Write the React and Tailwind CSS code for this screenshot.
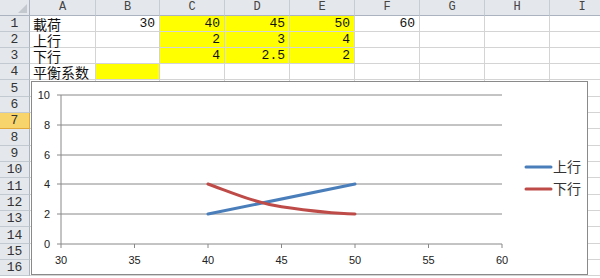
import React from "react";

const cols = [
  { key: "A", w: "w-[66px]" },
  { key: "B", w: "w-[64px]" },
  { key: "C", w: "w-[65px]" },
  { key: "D", w: "w-[65px]" },
  { key: "E", w: "w-[65px]" },
  { key: "F", w: "w-[65px]" },
  { key: "G", w: "w-[65px]" },
  { key: "H", w: "w-[65px]" },
  { key: "I", w: "w-[65px]" },
];

// rows 1-16, Excel rounds some rows up by a pixel
const rowHeights = [
  "h-[16px]", "h-[16px]", "h-[16px]", "h-[16px]",
  "h-[17px]", "h-[16px]", "h-[16px]", "h-[17px]",
  "h-[16px]", "h-[16px]", "h-[17px]", "h-[16px]",
  "h-[16px]", "h-[17px]", "h-[16px]", "h-[16px]",
];

const data = {
  1: { A: "載荷", B: "30", C: "40", D: "45", E: "50", F: "60" },
  2: { A: "上行", C: "2", D: "3", E: "4" },
  3: { A: "下行", C: "4", D: "2.5", E: "2" },
  4: { A: "平衡系数" },
};

const isYellow = (r, c) =>
  (r >= 1 && r <= 3 && (c === "C" || c === "D" || c === "E")) || (r === 4 && c === "B");

const yTicks = [
  { v: 10, y: 95 },
  { v: 8, y: 125 },
  { v: 6, y: 155 },
  { v: 4, y: 184 },
  { v: 2, y: 214 },
  { v: 0, y: 244 },
];

const xTicks = [
  { v: 30, x: 61 },
  { v: 35, x: 134.5 },
  { v: 40, x: 208 },
  { v: 45, x: 281.5 },
  { v: 50, x: 355 },
  { v: 55, x: 428.5 },
  { v: 60, x: 502 },
];

const Chart = () => (
  <div className="absolute left-[31px] top-[81px] w-[557px] h-[194px] border border-[#8a8a8a] bg-white">
    <svg width="555" height="192" className="block font-['Liberation_Sans',Arial,sans-serif]">
      <g transform="translate(-32,-82)">
        {yTicks.map((t) => (
          <g key={t.v}>
            <line x1="57" x2="502" y1={t.y} y2={t.y} stroke="#888" strokeWidth="1" />
            <text x="50" y={t.y + 4} fontSize="11" textAnchor="end" fill="#222">
              {t.v}
            </text>
          </g>
        ))}
        <line x1="61" x2="61" y1="95" y2="244" stroke="#888" strokeWidth="1" />
        {xTicks.map((t) => (
          <g key={t.v}>
            <line x1={t.x} x2={t.x} y1="244" y2="248" stroke="#888" strokeWidth="1" />
            <text x={t.x} y="264" fontSize="11" textAnchor="middle" fill="#222">
              {t.v}
            </text>
          </g>
        ))}
        <line x1="208" y1="214" x2="355" y2="184" stroke="#4a7ebb" strokeWidth="3" strokeLinecap="round" />
        <path
          d="M208,184 C233,193 256,203 281.5,206.7 S335,213.5 355,214"
          fill="none"
          stroke="#be4b48"
          strokeWidth="3"
          strokeLinecap="round"
        />
        <line x1="526" x2="551" y1="167" y2="167" stroke="#4a7ebb" strokeWidth="3" strokeLinecap="round" />
        <text x="553" y="172" fontSize="14" fill="#333" className="font-['Noto_Sans_CJK_SC',sans-serif]">
          上行
        </text>
        <line x1="526" x2="551" y1="189" y2="189" stroke="#be4b48" strokeWidth="3" strokeLinecap="round" />
        <text x="553" y="194" fontSize="14" fill="#333" className="font-['Noto_Sans_CJK_SC',sans-serif]">
          下行
        </text>
      </g>
    </svg>
  </div>
);

export default function App() {
  return (
    <div className="relative w-[600px] h-[278px] overflow-hidden bg-white">
      <div className="flex h-[16px]">
        <div className="relative w-[30px] h-[16px] shrink-0 bg-[#e4e8ed] border-r border-b border-[#aab3bf]">
          <div className="absolute right-[2px] bottom-[2px] w-0 h-0 border-l-[9px] border-l-transparent border-b-[9px] border-b-[#c3c8cf]" />
        </div>
        {cols.map((c) => (
          <div
            key={c.key}
            className={`${c.w} shrink-0 h-[16px] bg-[#e4e8ed] border-r border-b border-[#aab3bf] border-r-[#c6ccd4] font-['Liberation_Mono',monospace] text-[12px] leading-[15px] text-center text-[#444]`}
          >
            {c.key}
          </div>
        ))}
      </div>
      {rowHeights.map((h, i) => {
        const r = i + 1;
        const sel = r === 7;
        return (
          <div key={r} className={`flex ${h}`}>
            <div
              className={`w-[30px] shrink-0 border-r border-b flex items-center justify-center font-['Liberation_Mono',monospace] text-[13px] leading-[15px] text-[#333] ${
                sel ? "bg-[#f8d46c] border-[#e2a83a]" : "bg-[#e4e8ed] border-[#c3c9d1] border-r-[#aab3bf]"
              }`}
            >
              {r}
            </div>
            {cols.map((c) => {
              const v = data[r] && data[r][c.key];
              const text = c.key === "A";
              return (
                <div
                  key={c.key}
                  className={`${c.w} shrink-0 border-r border-b border-[#d4d4d4] flex items-center whitespace-nowrap text-[#111] ${
                    isYellow(r, c.key) ? "bg-[#ffff00]" : "bg-white"
                  } ${
                    text
                      ? "justify-start pl-[3px] font-['Noto_Sans_CJK_SC',sans-serif] text-[14px] leading-[14px]"
                      : "justify-end pr-[4px] font-['Liberation_Mono',monospace] text-[13px] leading-[15px]"
                  }`}
                >
                  {v}
                </div>
              );
            })}
          </div>
        );
      })}
      <Chart />
    </div>
  );
}
